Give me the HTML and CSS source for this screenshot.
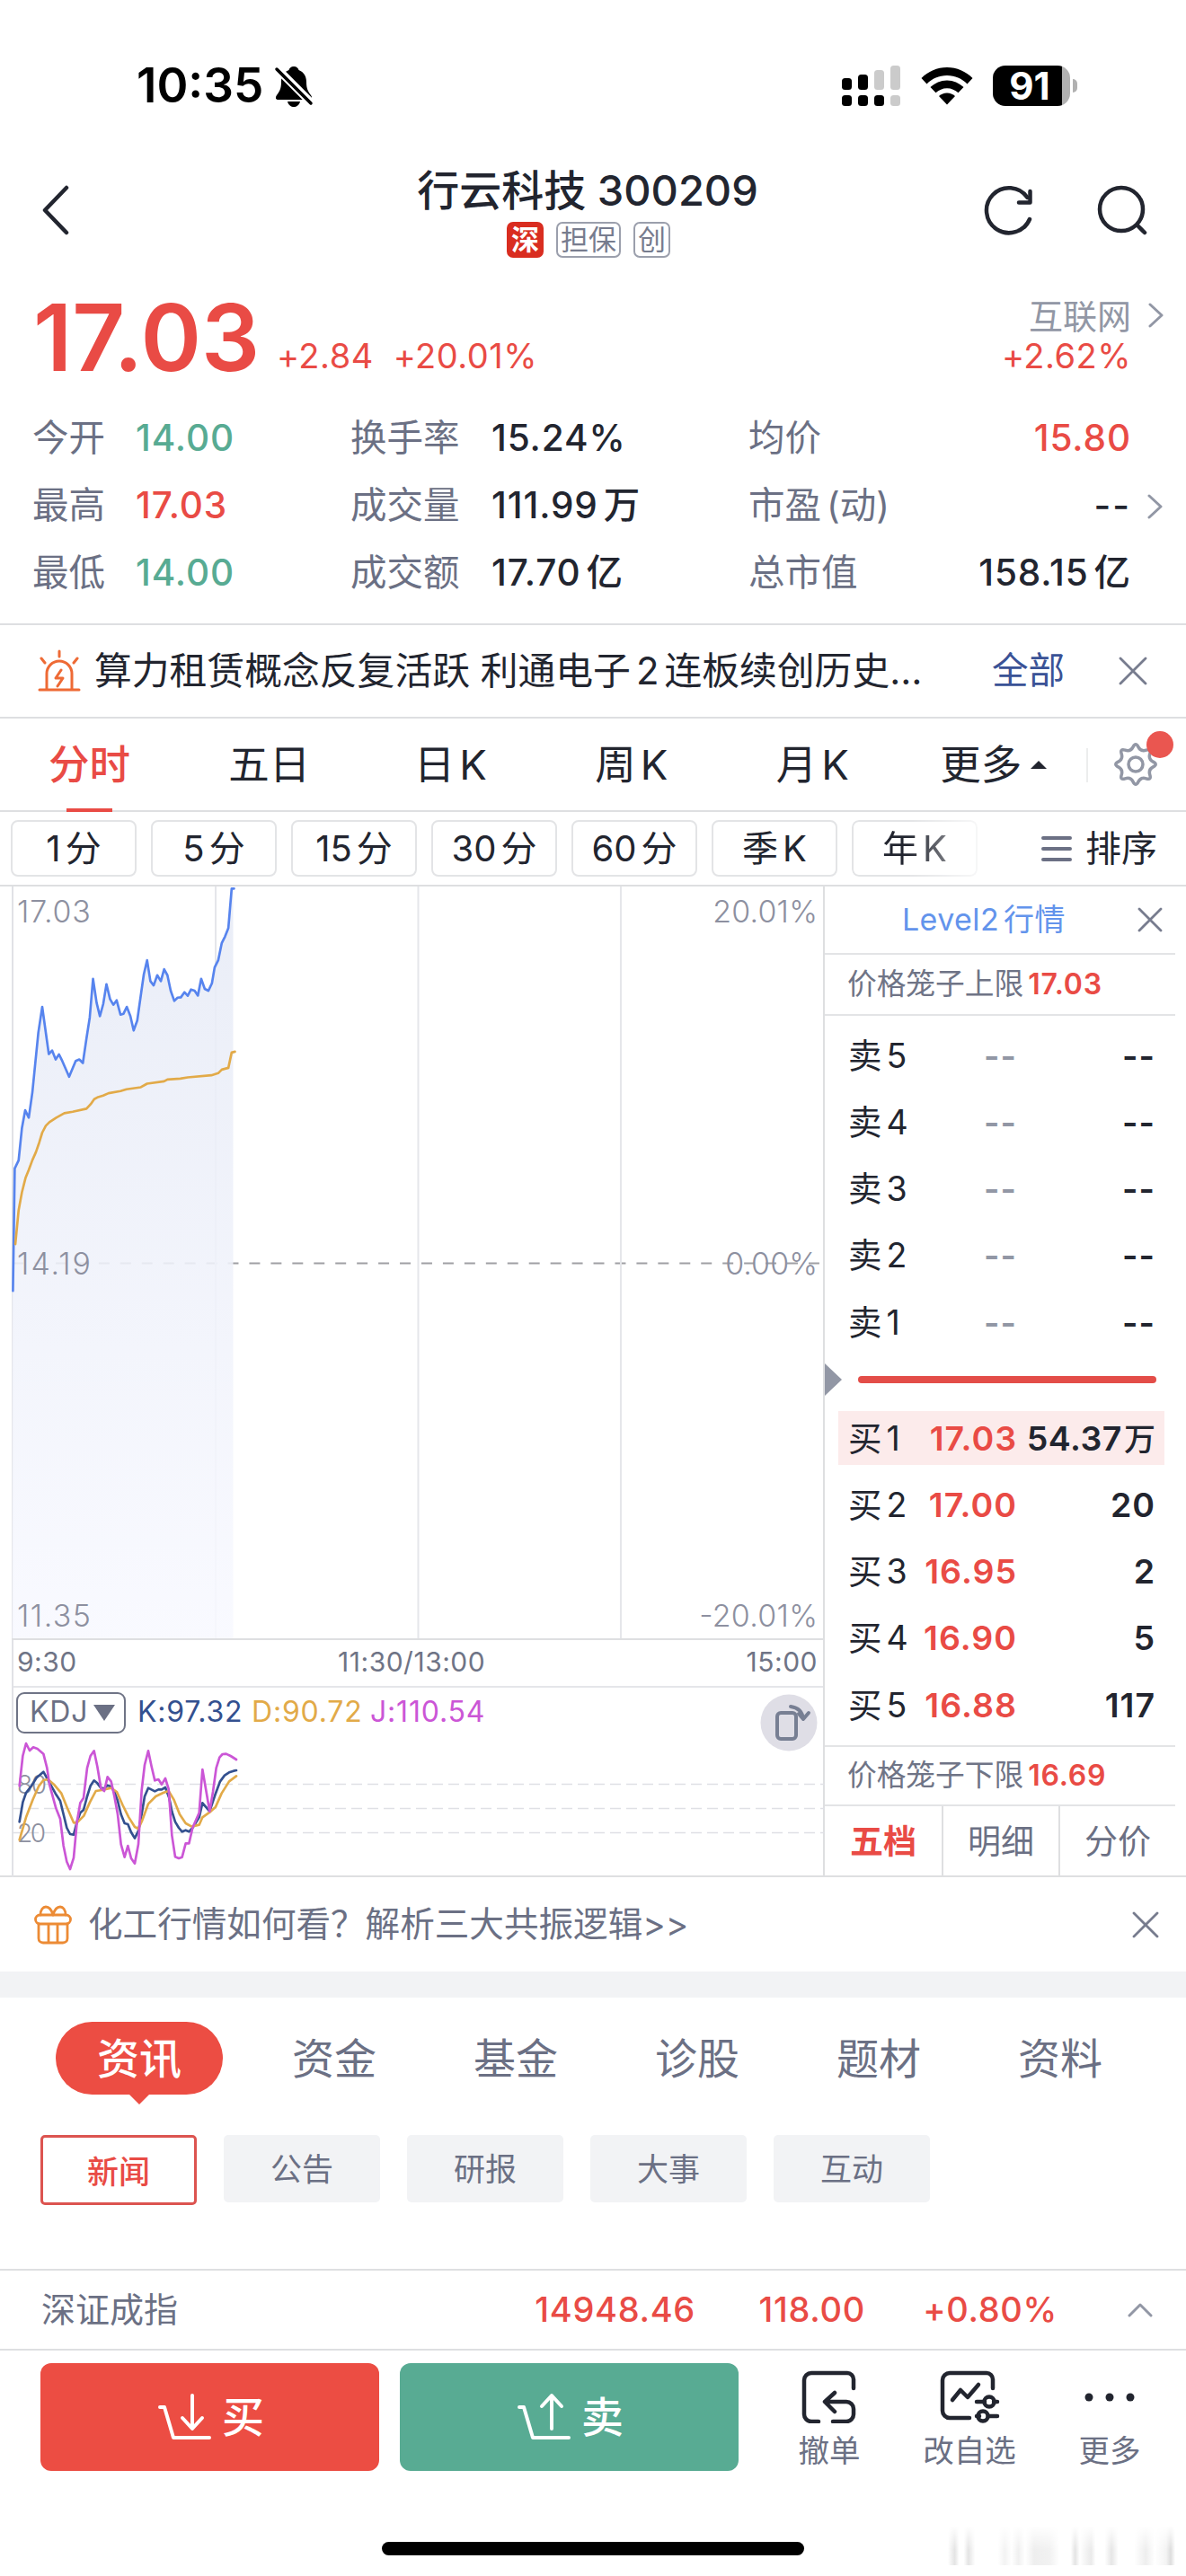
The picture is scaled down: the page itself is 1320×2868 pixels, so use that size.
FILE: index.html
```html
<!DOCTYPE html>
<html lang="zh-CN">
<head>
  <meta charset="UTF-8">
  <title>行云科技 300209</title>
  <meta name="viewport" content="width=device-width, initial-scale=1.0">
  <link rel="stylesheet" href="styles.css">
</head>
<body>

<div class="phone">

  <!-- Status bar -->
  <div class="status-bar">
    <span class="clock">10:35</span>
    <svg class="bell" width="44" height="46" viewBox="0 0 44 46">
      <path d="M22 1c-3 0-5 2-5.500 4C11 7 8 12 8 18c0 8-2 11-5 15-2 3-1 5 2 5h34c3 0 4-2 2-5-3-4-5-7-5-15 0-6-3-11-8.500-13C27 3 25 1 22 1z"/>
      <path d="M15 40h14c-1 4-4 6-7 6s-6-2-7-6z"/>
      <path d="M3 3l40 40" stroke="#fff" stroke-width="9"/>
      <path d="M3 4l38 38" stroke="#000" stroke-width="3.500" stroke-linecap="round"/>
    </svg>
    <svg class="signal" width="65" height="46" viewBox="0 0 65 46">
      <rect x="0" y="14" width="11" height="13" rx="3.500"/>
      <rect x="18" y="10" width="11" height="17" rx="3.500"/>
      <rect class="off" x="36" y="5" width="11" height="22" rx="3.500"/>
      <rect class="off" x="54" y="0" width="11" height="27" rx="3.500"/>
      <rect x="0" y="33" width="11" height="12" rx="3.500"/>
      <rect x="18" y="33" width="11" height="12" rx="3.500"/>
      <rect x="36" y="33" width="11" height="12" rx="3.500"/>
      <rect class="off" x="54" y="33" width="11" height="12" rx="3.500"/>
    </svg>
    <svg class="wifi" width="58" height="42" viewBox="0 0 58 42">
      <path d="M29 0C18 0 8 4.500.500 12l6 6.500C12.500 12.500 20 9 29 9s16.500 3.500 22.500 9.500l6-6.500C50 4.500 40 0 29 0z"/>
      <path d="M29 14.500c-7 0-13.500 3-18.500 7.500l6 6.300c3.500-3 7.500-5 12.500-5s9 2 12.500 5l6-6.300C42.500 17.500 36 14.500 29 14.500z"/>
      <path d="M29 28.500c-3.500 0-6.500 1.300-9 3.500l9 9.500 9-9.500c-2.500-2.200-5.500-3.500-9-3.500z"/>
    </svg>
    <div class="battery">91</div>
    <div class="battery-cap"></div>
  </div>

  <!-- Header -->
  <div class="header">
    <svg class="back" width="32" height="56" viewBox="0 0 32 56"><path d="M28 3L4 28l24 25"/></svg>
    <div class="title">
      <h1>行云科技 300209</h1>
      <div class="badges">
        <span class="badge red">深</span>
        <span class="badge">担保</span>
        <span class="badge">创</span>
      </div>
    </div>
    <svg class="refresh" width="56" height="56" viewBox="0 0 56 56">
      <path d="M51 38A25 25 0 1 1 48.500 14"/>
      <path d="M51.500 7v12.500H39"/>
    </svg>
    <svg class="search" width="56" height="56" viewBox="0 0 56 56">
      <circle cx="27" cy="27" r="24"/>
      <path d="M45 45l8 8"/>
    </svg>
  </div>

  <!-- Quote -->
  <div class="price-row">
    <span class="price">17.03</span>
    <span class="change">+2.84</span>
    <span class="change percent">+20.01%</span>
    <div class="sector">
      <span class="sector-name">互联网</span>
      <span class="change">+2.62%</span>
    </div>
    <svg class="arrow" width="18" height="28" viewBox="0 0 18 28"><path d="M2 2l13 12L2 26"/></svg>
  </div>

  <div class="stats">
    <span>今开</span><b class="green">14.00</b>
    <span>换手率</span><b>15.24%</b>
    <span>均价</span><b class="red-text last">15.80</b><i></i>
    <span>最高</span><b class="red-text">17.03</b>
    <span>成交量</span><b>111.99<em>万</em></b>
    <span>市盈<em>(动)</em></span><b class="last dashes">--</b>
    <svg class="arrow" width="18" height="28" viewBox="0 0 18 28"><path d="M2 2l13 12L2 26"/></svg>
    <span>最低</span><b class="green">14.00</b>
    <span>成交额</span><b>17.70<em>亿</em></b>
    <span>总市值</span><b class="last">158.15<em>亿</em></b><i></i>
  </div>

  <div class="alert">
    <svg width="48" height="48" viewBox="0 0 48 48">
      <path d="M2 45h44M10 44V27a14 14 0 0 1 28 0v17M24 2v6M4 10l4 5M44 10l-4 5"/>
      <path d="M26 23l-6 9h8l-6 9"/>
    </svg>
    <p>算力租赁概念反复活跃 利通电子<em>2</em><em>连板续创历史…</em></p>
    <a>全部</a>
    <svg class="close" width="32" height="32" viewBox="0 0 32 32"><path d="M2 2l28 28M30 2L2 30"/></svg>
  </div>

  <!-- Period tabs -->
  <div class="tabs">
    <span class="active">分时</span>
    <span>五日</span>
    <span>日<em>K</em></span>
    <span>周<em>K</em></span>
    <span>月<em>K</em></span>
    <span class="more">更多<i></i></span>
    <div class="settings">
      <svg width="52" height="52" viewBox="-26 -26 52 52">
        <path d="M19.400-2.900Q25 0 19.400 2.900Q13.900 5.700 15.800 11.700Q17.700 17.700 11.700 15.800Q5.700 13.900 2.900 19.400Q0 25-2.900 19.400Q-5.700 13.900-11.700 15.800Q-17.700 17.700-15.800 11.700Q-13.900 5.700-19.400 2.900Q-25 0-19.400-2.900Q-13.900-5.700-15.800-11.700Q-17.700-17.700-11.700-15.800Q-5.700-13.900-2.900-19.400Q0-25 2.900-19.400Q5.700-13.900 11.700-15.800Q17.700-17.700 15.800-11.700Q13.900-5.700 19.400-2.900z"/>
        <circle r="8"/>
      </svg>
    </div>
  </div>

  <div class="periods">
    <span>1<em>分</em></span>
    <span>5<em>分</em></span>
    <span>15<em>分</em></span>
    <span>30<em>分</em></span>
    <span>60<em>分</em></span>
    <span>季<em>K</em></span>
    <span class="fade">年<em>K</em></span>
    <svg width="34" height="30" viewBox="0 0 34 30"><path d="M2 3h30M2 15h30M2 27h30"/></svg>
    <div class="sort">排序</div>
  </div>

  <!-- Charts + order book -->
  <div class="market">
    <div class="charts">
      <svg class="plot" width="905" height="839" viewBox="0 0 905 839">
        <defs>
          <linearGradient id="fill" x1="0" y1="0" x2="0" y2="1">
            <stop offset="0" stop-color="#e7ebf6"/>
            <stop offset="1" stop-color="#f8f9ff"/>
          </linearGradient>
        </defs>
        <path class="mid" d="M0 420.500H905"/>
        <path class="grid" d="M226.500 0V839M452.500 0V839M678.500 0V839"/>
        <g transform="translate(-13 -7) scale(.33333)">
          <path fill="url(#fill)" opacity=".88" d="M38 2538V1375L46 965 59 938 70 830 81 770 93 795 105 710 125 510 138 424 160 582 171 570 183 600 194 583 205 605 228 658 250 605 262 600 274 612 286 530 297 460 308 330 320 410 331 455 342 415 353 348 365 398 376 417 387 402 400 450 410 447 421 424 433 455 444 503 456 470 468 385 478 315 489 268 500 338 511 352 523 318 535 338 546 298 557 318 568 370 580 404 591 393 602 392 614 375 625 387 636 366 648 370 659 386 670 330 682 364 694 370 706 345 715 292 727 268 739 210 750 188 761 160 772 28H777V2538z"/>
          <polyline class="line" stroke="#5784ee" points="40,1375 46,965 59,938 70,830 81,770 93,795 105,710 125,510 138,424 160,582 171,570 183,600 194,583 205,605 228,658 250,605 262,600 274,612 286,530 297,460 308,330 320,410 331,455 342,415 353,348 365,398 376,417 387,402 400,450 410,447 421,424 433,455 444,503 456,470 468,385 478,315 489,268 500,338 511,352 523,318 535,338 546,298 557,318 568,370 580,404 591,393 602,392 614,375 625,387 636,366 648,370 659,386 670,330 682,364 694,370 706,345 715,292 727,268 739,210 750,188 761,160 772,28 780,28"/>
          <polyline class="line" stroke="#e2aa48" points="48,1218 59,1105 70,1045 82,997 93,970 105,937 117,910 128,878 138,845 150,822 162,810 185,795 212,780 240,775 286,765 300,750 312,733 325,726 342,721 360,713 400,706 420,700 468,693 489,681 546,673 557,667 600,664 625,660 704,653 727,646 739,634 761,628 772,577 783,574"/>
        </g>
        <g class="axis">
          <text x="5" y="40" textLength="82">17.03</text>
          <text x="5" y="433" textLength="82">14.19</text>
          <text x="5" y="826" textLength="82">11.35</text>
          <text x="898" y="40" text-anchor="end" textLength="117">20.01%</text>
          <text x="898" y="433" text-anchor="end" textLength="103">0.00%</text>
          <text x="898" y="826" text-anchor="end" textLength="132">-20.01%</text>
        </g>
      </svg>
      <div class="times"><span>9:30</span><span>11:30/13:00</span><span>15:00</span></div>
      <div class="kdj">
        <div class="kdj-head">
          <span class="select">KDJ<i></i></span>
          <span class="k">K:97.32</span>
          <span class="d">D:90.72</span>
          <span class="j">J:110.54</span>
          <svg class="rotate" width="64" height="64" viewBox="0 0 64 64">
            <circle cx="32" cy="32" r="31.500" fill="#dfdee6"/>
            <rect x="19" y="21" width="21" height="29" rx="4"/>
            <path d="M34 14c8 1 13 6 14 14M43 22l5 6 6-7"/>
          </svg>
        </div>
        <svg width="905" height="152" viewBox="0 0 905 152">
          <path class="guide" d="M0 49.500H905M0 76.500H905M0 103.500H905"/>
          <g class="axis small">
            <text x="6" y="60" textLength="33">80</text>
            <text x="6" y="114" textLength="32">20</text>
          </g>
          <g transform="translate(-13 -17) scale(.33333)">
            <polyline class="line" stroke="#33508f" points="65,325 76,260 87,228 105,205 122,178 145,158 160,185 185,230 201,255 212,300 223,345 234,366 246,368 257,325 268,295 279,285 291,240 302,205 314,187 325,196 337,212 348,214 359,203 371,208 382,225 393,255 404,300 416,330 427,333 438,360 450,380 462,355 473,300 483,240 495,212 517,223 529,217 540,217 552,210 565,245 574,290 585,325 597,345 608,358 620,353 631,358 643,345 665,310 676,262 700,290 720,230 735,190 750,170 765,160 780,155 789,153"/>
            <polyline class="line" stroke="#e2aa48" points="65,385 87,310 110,250 130,205 145,186 160,183 180,200 205,230 225,280 246,328 257,328 280,305 300,260 320,222 340,219 371,212 390,225 410,270 430,310 450,342 462,348 475,320 495,265 520,240 545,228 563,222 580,250 600,300 620,330 640,341 665,335 676,310 700,293 720,275 740,230 765,190 789,172"/>
            <polyline class="line" stroke="#cb56d6" points="65,205 76,105 87,63 99,87 111,76 125,81 145,98 157,145 165,200 187,280 201,315 212,405 223,458 234,483 246,445 257,325 268,262 279,245 291,145 302,105 314,88 325,140 337,212 348,222 359,175 371,190 382,240 393,300 404,400 416,443 427,405 438,447 450,464 462,400 473,220 483,135 495,88 506,140 517,187 529,183 540,200 552,180 563,215 574,370 585,442 597,447 608,443 620,397 631,397 643,345 665,295 676,150 688,220 700,290 711,225 722,145 733,110 743,99 755,98 770,105 789,117"/>
          </g>
        </svg>
      </div>
    </div>

    <div class="book">
      <div class="level2">
        <span>Level2<em>行情</em></span>
        <svg class="close" width="28" height="28" viewBox="0 0 28 28"><path d="M2 2l24 24M26 2L2 26"/></svg>
      </div>
      <div class="cage">价格笼子上限<b>17.03</b></div>
      <div class="orders sell">
        <div><span>卖<em>5</em></span><s>--</s><b>--</b></div>
        <div><span>卖<em>4</em></span><s>--</s><b>--</b></div>
        <div><span>卖<em>3</em></span><s>--</s><b>--</b></div>
        <div><span>卖<em>2</em></span><s>--</s><b>--</b></div>
        <div><span>卖<em>1</em></span><s>--</s><b>--</b></div>
      </div>
      <div class="ratio"><i></i><div></div></div>
      <div class="orders buy">
        <div class="hot"><span>买<em>1</em></span><s>17.03</s><b>54.37<em>万</em></b></div>
        <div><span>买<em>2</em></span><s>17.00</s><b>20</b></div>
        <div><span>买<em>3</em></span><s>16.95</s><b>2</b></div>
        <div><span>买<em>4</em></span><s>16.90</s><b>5</b></div>
        <div><span>买<em>5</em></span><s>16.88</s><b>117</b></div>
      </div>
      <div class="cage low">价格笼子下限<b>16.69</b></div>
      <div class="book-tabs"><span class="active">五档</span><span>明细</span><span>分价</span></div>
    </div>
  </div>

  <div class="promo">
    <svg width="42" height="44" viewBox="0 0 42 44">
      <rect x="1.500" y="11" width="39" height="10" rx="5"/>
      <path d="M5 21v16c0 3 2 5 5 5h22c3 0 5-2 5-5V21M16 22v20M26 22v20M21 11C19 4 16 2 13 2S7 5 7 11M21 11c2-7 5-9 8-9s6 3 6 9"/>
    </svg>
    <p>化工行情如何看？解析三大共振逻辑&gt;&gt;</p>
    <svg class="close" width="30" height="30" viewBox="0 0 30 30"><path d="M2 2l26 26M28 2L2 28"/></svg>
  </div>

  <!-- News -->
  <div class="sections">
    <span class="active">资讯</span>
    <span>资金</span>
    <span>基金</span>
    <span>诊股</span>
    <span>题材</span>
    <span>资料</span>
  </div>
  <div class="filters">
    <span class="active">新闻</span>
    <span>公告</span>
    <span>研报</span>
    <span>大事</span>
    <span>互动</span>
  </div>

  <div class="index-bar">
    <span>深证成指</span>
    <b class="points">14948.46</b>
    <b class="diff">118.00</b>
    <b class="rate">+0.80%</b>
    <svg width="28" height="16" viewBox="0 0 28 16"><path d="M2 14L14 2l12 12"/></svg>
  </div>

  <div class="actions">
    <button class="buy-btn">
      <svg width="60" height="54" viewBox="0 0 60 54"><path d="M2 16h5l10 34h40M38 3v36M27 28l11 12 11-12"/></svg>买
    </button>
    <button class="sell-btn">
      <svg width="60" height="54" viewBox="0 0 60 54"><path d="M2 16h5l10 34h40M38 40V4M27 15L38 3l11 12"/></svg>卖
    </button>
    <div class="tool cancel">
      <svg width="66" height="60" viewBox="0 0 66 60">
        <path d="M21 58h-8a8 8 0 0 1-8-8V12a8 8 0 0 1 8-8h40a7 7 0 0 1 7 7v10M37 58h15a8 8 0 0 0 8-8V44a8 8 0 0 0-8-8H29M39 26L28 36l11 11"/>
      </svg>
      撤单
    </div>
    <div class="tool edit">
      <svg width="68" height="60" viewBox="0 0 68 60">
        <path d="M34 54H12a8 8 0 0 1-8-8V12a8 8 0 0 1 8-8h41a7 7 0 0 1 7 7v10M15 34l9-11 8 8 12-14M42 36h9M61 36h4M42 52h3M56 52h9"/>
        <circle cx="56" cy="36" r="5.500"/><circle cx="49" cy="52" r="5.500"/>
      </svg>
      改自选
    </div>
    <div class="tool more-tool">
      <svg width="60" height="60" viewBox="0 0 60 60"><circle cx="7" cy="31" r="4.500"/><circle cx="30" cy="31" r="4.500"/><circle cx="53" cy="31" r="4.500"/></svg>
      更多
    </div>
  </div>

  <div class="home"><div class="home-bar"></div><div class="smudge"></div></div>
</div>

</body>
</html>
```
FILE: styles.css
```css
* {
  box-sizing: border-box;
}

body {
  margin: 0;
  background: #fff;
  color: #22252f;
  font-family: Inter, "Noto Sans CJK SC", sans-serif;
  line-height: 1.2;
}

.phone {
  width: 1320px;
  height: 2868px;
  overflow: hidden;
}

em, i {
  font-style: normal;
}

svg {
  display: block;
  flex: none;
  fill: none;
  stroke-linecap: round;
  stroke-linejoin: round;
}

span, b, a, p, h1 {
  white-space: nowrap;
}

.active, .red-text {
  color: #e94b45;
}

.green {
  color: #58ab93;
}

/* status bar */
.status-bar {
  display: flex;
  align-items: center;
  height: 180px;
  padding: 11px 0 0 152px;
}

.status-bar svg {
  fill: #000;
}

.clock {
  width: 153px;
  color: #000;
  font-size: 53px;
  font-weight: 600;
}

.status-bar .signal {
  margin-left: 588px;
}

.signal .off {
  fill: #cbcbcb;
}

.wifi {
  margin-left: 23px;
}

.battery {
  width: 86px;
  height: 45px;
  margin-left: 22px;
  padding-right: 4px;
  border-radius: 14px;
  background: linear-gradient(90deg, #000 77px, #b1b1b1 77px);
  color: #fff;
  font-size: 42px;
  font-weight: 700;
  line-height: 45px;
  text-align: center;
}

.battery-cap {
  width: 5px;
  height: 15px;
  margin-left: 3px;
  border-radius: 0 6px 6px 0;
  background: #b1b1b1;
}

/* header */
.header {
  display: flex;
  height: 140px;
}

.header svg {
  margin-top: 26px;
  stroke: #22252f;
  stroke-width: 4.500;
}

.back {
  margin-left: 46px;
}

.title {
  width: 400px;
  margin-left: 376px;
}

h1 {
  margin: 0;
  font-size: 47px;
  font-weight: 500;
  line-height: 64px;
  text-align: center;
}

.badges {
  display: flex;
  gap: 14px;
  margin: 3px 0 0 110px;
}

.badge {
  height: 40px;
  padding: 0 3px;
  border: 2px solid #9b9fac;
  border-radius: 7px;
  color: #777c8e;
  font-size: 31px;
  line-height: 35px;
}

.badge.red {
  border-color: #d92d20;
  background: #d92d20;
  color: #fff;
  font-weight: 700;
}

.refresh {
  margin-left: 241px;
}

.search {
  margin-left: 70px;
}

/* quote */
.price-row {
  display: flex;
  height: 131px;
  color: #e94b45;
}

.price {
  width: 271px;
  margin-left: 37px;
  font-size: 102.500px;
  font-weight: 600;
  line-height: 112px;
}

.change {
  padding-top: 51px;
  font-size: 38px;
  letter-spacing: .5px;
  line-height: 50px;
}

.percent {
  margin-left: 22px;
}

.sector {
  display: flex;
  flex-direction: column;
  align-items: flex-end;
  width: 200px;
  margin-left: 461px;
}

.sector-name {
  color: #9297a5;
  font-size: 38px;
  line-height: 64px;
}

.sector .change {
  padding: 0;
  line-height: 24px;
}

.arrow {
  margin-left: 19px;
  stroke: #9297a5;
  stroke-width: 3;
}

.price-row .arrow {
  margin-top: 17px;
}

.stats {
  display: grid;
  grid-template-columns: 115px 239px 157px 286px 190px 236px 60px;
  grid-auto-rows: 75px;
  align-items: center;
  height: 243px;
  padding-left: 36px;
  color: #6b7084;
  font-size: 40.500px;
}

.stats b {
  font-weight: 500;
  letter-spacing: .9px;
}

.stats b:not([class]), .stats .last:not(.red-text) {
  color: #22252f;
}

.stats .last {
  text-align: right;
}

.stats em {
  margin-left: 6px;
}

.stats .dashes {
  letter-spacing: 2px;
}

.stats svg {
  margin-left: 18px;
}

.alert {
  display: flex;
  align-items: center;
  height: 106px;
  padding-left: 42px;
  border-top: 2px solid #dedfe1;
  border-bottom: 2px solid #dedfe1;
  font-size: 41.800px;
}

.alert svg {
  stroke: #ee6a35;
  stroke-width: 3;
}

.alert p {
  width: 999px;
  margin: 0 0 0 15px;
}

.alert em {
  margin-left: 6px;
}

.alert a {
  width: 141px;
  color: #3a5296;
  font-size: 40.500px;
}

.alert .close, .promo .close, .level2 .close {
  stroke: #777c8e;
  stroke-width: 2.800;
}

/* tabs */
.tabs {
  display: grid;
  grid-template-columns: 199px repeat(5, 201.500px) 1fr;
  align-items: center;
  height: 104px;
  border-bottom: 2px solid #dedfe1;
  font-size: 45.500px;
  text-align: center;
}

.tabs span {
  line-height: 104px;
}

.tabs em, .periods em {
  margin-left: 5px;
}

.tabs .active {
  background: linear-gradient(#e94b45, #e94b45) center bottom / 51px 4px no-repeat;
  font-weight: 500;
}

.more i {
  display: inline-block;
  margin: 0 0 12px 10px;
  border: 9px solid transparent;
  border-top: 0;
  border-bottom: 9px solid #22252f;
}

.settings {
  position: relative;
  height: 38px;
  margin-left: 2px;
  border-left: 2px solid #eceded;
}

.settings svg {
  margin: -8px 0 0 27px;
  stroke: #9297a5;
  stroke-width: 3.500;
}

.settings::after {
  content: "";
  position: absolute;
  top: -19px;
  left: 65px;
  width: 30px;
  height: 30px;
  border-radius: 50%;
  background: #ea5650;
}

.periods {
  display: flex;
  align-items: center;
  gap: 16px;
  height: 83px;
  padding-left: 12px;
  border-bottom: 2px solid #dedfe1;
  font-size: 40px;
}

.periods span {
  width: 140px;
  height: 63px;
  border: 2px solid #e3e4e6;
  border-radius: 8px;
  line-height: 60px;
  text-align: center;
}

.periods .fade {
  -webkit-mask-image: linear-gradient(90deg, #000 45%, rgba(0, 0, 0, .3));
}

.periods svg {
  margin-left: 55px;
  stroke: #6b7084;
  stroke-width: 4;
}

.sort {
  margin-left: -1px;
}

/* charts */
.market {
  display: grid;
  grid-template-columns: 905px 390px;
  height: 1103px;
  padding-left: 13px;
  border-bottom: 2px solid #dedfe1;
}

.charts {
  border-left: 2px solid #e1e2e6;
  border-right: 2px solid #dedfe1;
}

.plot {
  border-bottom: 2px solid #dedfe1;
}

.charts > svg, .kdj > svg {
  margin: 0 -2px;
}

.grid {
  stroke: #e5e6ea;
  stroke-width: 2;
}

.mid {
  stroke: #a0a0a4;
  stroke-width: 2;
  stroke-linecap: butt;
  stroke-dasharray: 12 12;
}

.guide {
  stroke: #dfe0e5;
  stroke-width: 1.500;
  stroke-linecap: butt;
  stroke-dasharray: 12 6;
}

.line {
  stroke-width: 8;
}

.axis {
  fill: #8d90a0;
  font-size: 34px;
  font-weight: 300;
}

.small {
  font-size: 28px;
}

.times {
  display: flex;
  justify-content: space-between;
  height: 53px;
  padding: 0 6px 0 4px;
  border-bottom: 2px solid #e5e6ea;
  color: #6f7486;
  font-size: 30px;
  letter-spacing: .5px;
  line-height: 49px;
}

.kdj-head {
  display: flex;
  align-items: center;
  height: 58px;
  padding-left: 3px;
  font-size: 32px;
  letter-spacing: .8px;
}

.select {
  display: flex;
  align-items: center;
  gap: 6px;
  width: 122px;
  height: 46px;
  margin: 0 13px 5px 0;
  padding-left: 13px;
  border: 2px solid #6f7486;
  border-radius: 9px;
  color: #6b7084;
}

.select i {
  border: 12px solid transparent;
  border-top: 18px solid #6b7084;
  border-bottom: 0;
}

.kdj-head span {
  margin-bottom: 3px;
}

.k {
  width: 127px;
  color: #33508f;
}

.d {
  width: 132px;
  color: #e2aa48;
}

.j {
  width: 434px;
  color: #cb56d6;
}

.rotate {
  margin-top: 20px;
  stroke: #777f93;
  stroke-width: 4;
}

.rotate circle {
  stroke: none;
}

/* order book */
.level2 {
  display: flex;
  align-items: center;
  height: 76px;
  padding-left: 86px;
  border-bottom: 2px solid #e3e4e6;
  color: #6394ec;
  font-size: 34px;
}

.level2 span {
  width: 262px;
  letter-spacing: .4px;
}

.level2 em {
  margin-left: 5px;
}

.cage {
  display: flex;
  align-items: center;
  height: 68px;
  padding-left: 25px;
  border-bottom: 2px solid #e3e4e6;
  color: #6f7486;
  font-size: 32.700px;
}

.cage b {
  margin-left: 5px;
  color: #e94b45;
  font-size: 32px;
  font-weight: 600;
  letter-spacing: .8px;
}

.orders div {
  display: grid;
  grid-template-columns: 80px 108px 1fr;
  align-items: center;
  height: 60px;
  margin: 0 12px 14.300px 15px;
  padding: 0 10px 0 11px;
  font-size: 37.500px;
}

.orders.sell {
  height: 372px;
  padding-top: 14px;
}

.orders.buy {
  height: 372px;
}

.orders span em {
  margin-left: 5px;
}

.orders s {
  color: #e94b45;
  font-weight: 600;
  letter-spacing: 1px;
  text-align: right;
  text-decoration: none;
}

.sell s {
  color: #9297a5;
}

.orders b {
  font-weight: 600;
  letter-spacing: 1px;
  text-align: right;
}

.orders b em {
  margin-left: 2px;
  font-size: 35px;
  font-weight: 500;
  letter-spacing: 0;
}

.orders .hot {
  background: #fcebeb;
}

.hot b {
  letter-spacing: .5px;
}

.ratio {
  display: flex;
  align-items: center;
  height: 68px;
  padding-bottom: 3px;
}

.ratio i {
  border: 18px solid transparent;
  border-left: 19px solid #9297a5;
  border-right: 0;
}

.ratio div {
  width: 332px;
  height: 8px;
  margin-left: 18px;
  border-radius: 4px;
  background: #e34d48;
}

.cage.low {
  border-top: 2px solid #e3e4e6;
}

.book-tabs {
  display: grid;
  grid-template-columns: repeat(3, 130px);
  font-size: 37px;
  line-height: 79px;
  text-align: center;
  color: #6b7084;
}

.book-tabs span + span {
  border-left: 2px solid #dedfe1;
}

.book-tabs .active {
  color: #e94b45;
  font-weight: 600;
}

/* promo + news */
.promo {
  display: flex;
  align-items: center;
  height: 134px;
  padding-left: 38px;
  border-bottom: 29px solid #f2f3f5;
  color: #6b7084;
  font-size: 38.600px;
}

.promo svg {
  stroke: #ec8b35;
  stroke-width: 2.800;
}

.promo p {
  width: 1162px;
  margin: 0 0 0 18px;
}

.sections {
  display: grid;
  grid-template-columns: repeat(6, 202px);
  height: 153px;
  padding: 27px 0 0 54px;
  color: #6b7084;
  font-size: 47px;
  line-height: 82px;
  text-align: center;
}

.sections .active {
  position: relative;
  width: 186px;
  height: 81px;
  margin-left: 8px;
  border-radius: 41px;
  background: #ec4d43;
  color: #fff;
  font-weight: 500;
}

.sections span + span {
  padding-left: 30px;
}

.sections .active::after {
  content: "";
  position: absolute;
  top: 80px;
  left: 81px;
  border: 12px solid transparent;
  border-top-color: #ec4d43;
  border-bottom: 0;
}

.filters {
  display: flex;
  gap: 30px;
  height: 149px;
  padding-left: 45px;
}

.filters span {
  width: 174px;
  height: 75px;
  border-radius: 5px;
  background: #f2f3f5;
  color: #6b7084;
  font-size: 35px;
  line-height: 77px;
  text-align: center;
}

.filters .active {
  height: 78px;
  border: 3px solid #dc5450;
  background: #fff;
  color: #e94b45;
  font-weight: 500;
}

/* bottom */
.index-bar {
  display: flex;
  align-items: center;
  height: 91px;
  padding-left: 46px;
  border-top: 2px solid #dedfe1;
  border-bottom: 2px solid #dedfe1;
  color: #6b7084;
  font-size: 38px;
}

.index-bar b {
  color: #e94b45;
  font-weight: 500;
  letter-spacing: .7px;
  text-align: right;
}

.points {
  width: 576px;
}

.diff {
  width: 189px;
}

.rate {
  width: 214px;
}

.index-bar svg {
  margin-left: 78px;
  stroke: #9297a5;
  stroke-width: 3;
}

.index-bar span {
  width: 152px;
}

.actions {
  display: flex;
  height: 195px;
  padding: 14px 0 0 45px;
}

button {
  display: flex;
  align-items: center;
  justify-content: center;
  gap: 11px;
  width: 377px;
  height: 120px;
  margin-right: 23px;
  padding: 0 0 0 3px;
  border: 0;
  border-radius: 12px;
  background: #ec4d43;
  color: #fff;
  font: 500 47px/1.2 Inter, "Noto Sans CJK SC", sans-serif;
}

button svg {
  stroke: #fff;
  stroke-width: 4;
}

.sell-btn {
  background: #58ab93;
}

.tool {
  display: flex;
  flex-direction: column;
  align-items: center;
  gap: 6px;
  width: 156px;
  padding-top: 7px;
  color: #6b7084;
  font-size: 34.500px;
  line-height: 50px;
}

.tool svg {
  stroke: #22252f;
  stroke-width: 4.500;
}

.more-tool svg {
  fill: #22252f;
  stroke: none;
}

.home {
  display: flex;
  padding-left: 425px;
}

.home-bar {
  width: 470px;
  height: 15px;
  margin-top: 18px;
  border-radius: 8px;
  background: #000;
}

.smudge {
  width: 253px;
  height: 44px;
  margin-left: 160px;
  background: linear-gradient(90deg, #fff, #e4e4e4 3%, #fff 5%, #fff 7%, #e4e4e4 9%, #fff 12%, #fff 22%, #f3f3f3 25%, #fff 28%, #f0f0f0 31%, #fff 34%, #eee 38%, #f2f2f2 45%, #fff 49%, #fff 54%, #e4e4e4 56%, #fff 58%, #eaeaea 63%, #fff 65%, #fff 69%, #e6e6e6 72%, #fff 75%, #fff 82%, #eee 87%, #fff 91%, #f4f4f4 96%, #ddd 98%, #fff);
  -webkit-mask-image: linear-gradient(transparent, #000 60%);
}
```
